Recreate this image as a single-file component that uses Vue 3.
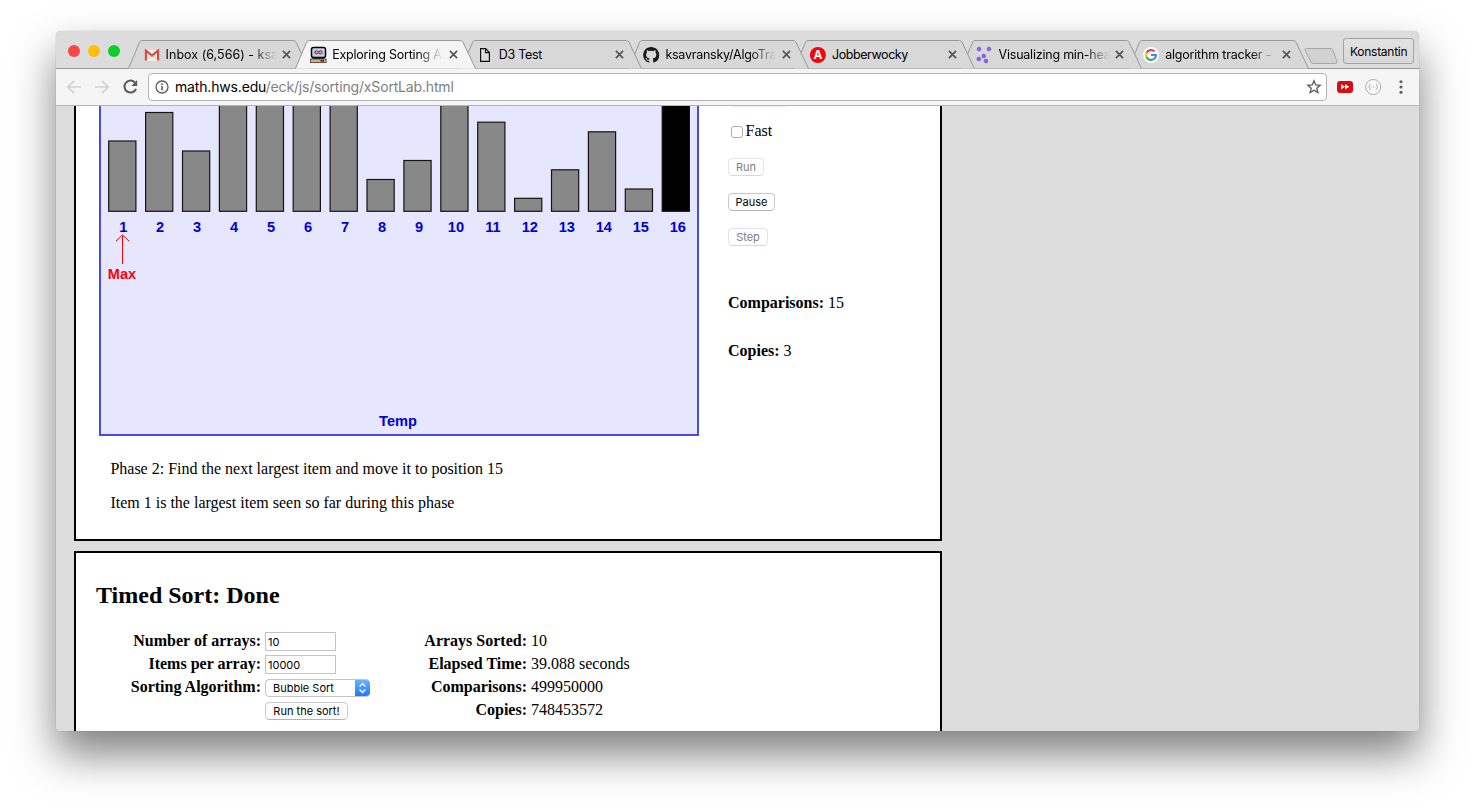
<script setup>
const tabs = [
  { icon: 'gmail', title: 'Inbox (6,566) - ksa', fade: true, ls: 0.02 },
  { icon: 'computer', title: 'Exploring Sorting Al', fade: true, active: true, ls: -0.22 },
  { icon: 'page', title: 'D3 Test', ls: -0.3 },
  { icon: 'github', title: 'ksavransky/AlgoTrac', fade: true, ls: -0.25 },
  { icon: 'angel', title: 'Jobberwocky', ls: -0.42 },
  { icon: 'nodes', title: 'Visualizing min-heap', fade: true, ls: -0.22 },
  { icon: 'google', title: 'algorithm tracker - G', fade: true, ls: -0.2 },
]
const tops = [35, 6.5, 45, -20, -20, -20, -20, 73.5, 54.5, -20, 16.2, 92.3, 63.8, 25.8, 83, -20]
const bars = tops.map((top, i) => ({
  n: i + 1,
  x: 9.7 + i * 36.9,
  y: top,
  h: 105.3 - top,
  label: 24.2 + i * 36.97,
  fill: i === 15 ? '#000' : '#888',
}))
const results = [
  ['Arrays Sorted:', '10'],
  ['Elapsed Time:', '39.088 seconds'],
  ['Comparisons:', '499950000'],
  ['Copies:', '748453572'],
]
</script>

<template>
  <div class="desktop">
    <div class="window">
      <header class="strip">
        <div class="lights"><i class="red"></i><i class="amber"></i><i class="green"></i></div>
        <div class="tabs">
          <div v-for="(t, i) in tabs" :key="i" class="tab" :style="{ zIndex: t.active ? 20 : 10 - i }">
            <svg class="shape" width="182" height="30" viewBox="0 0 182 30">
              <path d="M0.5 28.5 L11.6 2.2 Q12.5 0.5 14 0.5 H165.5 Q167 0.5 168 2.2 L180.5 28.5 Z" :fill="t.active ? '#f5f5f5' : '#d8d8d8'" />
              <path d="M0.5 28.5 L11.6 2.2 Q12.5 0.5 14 0.5 H165.5 Q167 0.5 168 2.2 L180.5 28.5" fill="none" stroke="#989898" />
              <path v-if="t.active" d="M1 28.5 H180 V30 H1 Z" fill="#f5f5f5" />
            </svg>
            <svg class="fav" width="18" height="18" viewBox="0 0 18 18">
              <g v-if="t.icon === 'gmail'">
                <path d="M2 4 H16 V15 H2 Z" fill="#eeeae8" />
                <path d="M2.9 14.6 V4.6 L9 9.6 L15.1 4.6 V14.6" fill="none" stroke="#d8493d" stroke-width="2.1" />
                <path d="M4 14 L8 9.5 M14 14 L10 9.5" stroke="#cfcac8" stroke-width=".7" />
              </g>
              <g v-else-if="t.icon === 'computer'" transform="translate(-1.5 -.6)">
                <rect x="3" y="2" width="14" height="10" rx="2" fill="#a9dcf5" stroke="#000" stroke-width="1.5" />
                <path d="M10 7 C8.8 5 6.4 5 6.4 7 S8.8 9 10 7 C11.2 5 13.6 5 13.6 7 S11.2 9 10 7" fill="none" stroke="#e21" stroke-width="1.3" />
                <rect x="2" y="13.6" width="15.6" height="3.6" fill="#d9ab7d" stroke="#533" stroke-width=".8" />
                <path d="M4 12.8 H16 M12 15.4 H15.5" stroke="#111" stroke-width="1.2" />
              </g>
              <path v-else-if="t.icon === 'page'" d="M4.6 2.7 H9.7 L13.4 6.5 V15.3 H4.6 Z M9.5 2.7 V6.7 H13.4" fill="#fff" fill-opacity=".15" stroke="#111" stroke-width="1.2" />
              <g v-else-if="t.icon === 'github'" transform="translate(.2 1)">
                <path fill="#191717" fill-rule="evenodd" d="M8 0C3.58 0 0 3.58 0 8c0 3.54 2.29 6.53 5.47 7.59.4.07.55-.17.55-.38 0-.19-.01-.82-.01-1.49-2.01.37-2.53-.49-2.69-.94-.09-.23-.48-.94-.82-1.13-.28-.15-.68-.52-.01-.53.63-.01 1.08.58 1.23.82.72 1.21 1.87.87 2.33.66.07-.52.28-.87.51-1.07-1.78-.2-3.64-.89-3.64-3.95 0-.87.31-1.59.82-2.15-.08-.2-.36-1.02.08-2.12 0 0 .67-.21 2.2.82.64-.18 1.32-.27 2-.27s1.36.09 2 .27c1.53-1.04 2.2-.82 2.2-.82.44 1.1.16 1.92.08 2.12.51.56.82 1.27.82 2.15 0 3.07-1.87 3.75-3.65 3.95.29.25.54.73.54 1.48 0 1.07-.01 1.93-.01 2.2 0 .21.15.46.55.38A8.01 8.01 0 0 0 16 8c0-4.42-3.58-8-8-8z" />
              </g>
              <g v-else-if="t.icon === 'angel'">
                <circle cx="8.9" cy="9" r="8" fill="#fb0007" />
                <text x="8.9" y="13.2" text-anchor="middle" class="angel-a">A</text>
              </g>
              <g v-else-if="t.icon === 'nodes'" fill="#8168ee" stroke="#6a50d8" stroke-width=".6" transform="translate(-1 0)">
                <circle cx="4" cy="3" r="1.9" /><circle cx="14" cy="3" r="1.9" />
                <circle cx="8.7" cy="10" r="1.9" /><circle cx="3.8" cy="13" r="1.9" /><circle cx="11" cy="15" r="1.9" />
              </g>
              <g v-else fill="none" stroke-width="2.1" transform="translate(-1 0)">
                <circle cx="9" cy="9" r="8" fill="#fff" />
                <path d="M12.6 5.6 A5 5 0 0 0 4.5 6.9" stroke="#ea4335" />
                <path d="M4.6 6.7 A5 5 0 0 0 4.6 11.3" stroke="#fbbc05" />
                <path d="M4.5 11.1 A5 5 0 0 0 12.2 12.8" stroke="#34a853" />
                <path d="M9 9 H14 A5 5 0 0 1 12.1 12.9" stroke="#4285f4" />
              </g>
            </svg>
            <span class="title" :class="{ fade: t.fade }" :style="{ letterSpacing: t.ls + 'px' }">{{ t.title }}</span>
            <svg class="close" width="9" height="9" viewBox="0 0 9 9"><path d="M.9 .9 L8.1 8.1 M8.1 .9 L.9 8.1" stroke="#555" stroke-width="1.7" /></svg>
          </div>
        </div>
        <svg class="newtab" width="34" height="18" viewBox="0 0 34 18"><path d="M2.5 1.5 H26 Q28 1.5 28.8 3.2 L33 14.5 Q33.4 16.5 31.5 16.5 H9.5 Q7.5 16.5 6.8 14.8 L1 3 Q.6 1.5 2.5 1.5 Z" fill="#d2d2d2" stroke="#a6a6a6" /></svg>
        <button class="user">Konstantin</button>
      </header>

      <div class="toolbar">
        <svg class="nav" width="90" height="20" viewBox="0 0 90 20" fill="none">
          <path d="M19 10 H6 M12 3.8 L5.8 10 L12 16.2" stroke="#d2d2d2" stroke-width="1.7" />
          <path d="M33 10 H46 M40 3.8 L46.2 10 L40 16.2" stroke="#d2d2d2" stroke-width="1.7" />
          <path d="M73 5.6 A6 6 0 1 0 74 12" stroke="#5a5a5a" stroke-width="2" />
          <path d="M75.2 3 V9 H69.2 Z" fill="#5a5a5a" />
        </svg>
        <div class="omnibox">
          <svg width="14" height="14" viewBox="0 0 14 14"><circle cx="7" cy="7" r="6" fill="none" stroke="#5a5a5a" stroke-width="1.3" /><path d="M7 6 V10.6 M7 3.3 V4.9" stroke="#5a5a5a" stroke-width="1.5" /></svg>
          <span class="url">math.hws.edu<em>/eck/js/sorting/xSortLab.html</em></span>
          <svg width="16" height="16" viewBox="0 0 16 16"><path d="M8 1.8 L9.7 6 L14.2 6.3 L10.8 9.2 L11.9 13.6 L8 11.2 L4.1 13.6 L5.2 9.2 L1.8 6.3 L6.3 6 Z" fill="none" stroke="#5a5a5a" stroke-width="1.3" /></svg>
        </div>
        <svg class="ext" width="76" height="20" viewBox="0 0 76 20">
          <rect x="1" y="4" width="16" height="12" rx="3" fill="#dd0b10" />
          <path d="M5 7 L9 9.8 L5 12.6 Z M9 7 L13.3 9.8 L9 12.6 Z" fill="#fff" />
          <circle cx="37.2" cy="10" r="7.5" fill="#fafafa" stroke="#ababab" />
          <path d="M34.6 7.2 Q33.6 7.2 33.6 8.2 Q33.6 10 32.7 10 Q33.6 10 33.6 11.8 Q33.6 12.8 34.6 12.8 M39.8 7.2 Q40.8 7.2 40.8 8.2 Q40.8 10 41.7 10 Q40.8 10 40.8 11.8 Q40.8 12.8 39.8 12.8" fill="none" stroke="#aaa" />
          <path d="M35.4 10 H39.2" stroke="#bbb" stroke-dasharray="1 .5" />
          <g fill="#606060"><circle cx="65" cy="4.8" r="1.55" /><circle cx="65" cy="10" r="1.55" /><circle cx="65" cy="15.2" r="1.55" /></g>
        </svg>
      </div>

      <main class="page">
        <section class="panel lab">
          <div class="lab-row">
            <svg class="canvas" width="600" height="330" viewBox="0 0 600 330">
              <path d="M0 -5 H600 V330 H0 Z" fill="#e6e6ff" />
              <path d="M1 -5 V329 H599 V-5" fill="none" stroke="#4a4ae0" stroke-width="2" />
              <rect v-for="b in bars" :key="b.n" :x="b.x" :y="b.y" width="27.2" :height="b.h" :fill="b.fill" stroke="#151515" stroke-width="1.2" />
              <text v-for="b in bars" :key="'l' + b.n" class="mark" :x="b.label" y="126" text-anchor="middle">{{ b.n }}</text>
              <path d="M23.5 158 V129.5 M17 135 L23.5 129 L30 135" fill="none" stroke="#f00" />
              <text class="mark max" x="23" y="173" text-anchor="middle">Max</text>
              <text class="mark" x="299" y="320" text-anchor="middle">Temp</text>
            </svg>
            <div class="controls">
              <div class="peek"></div>
              <label class="fast"><i class="box"></i>Fast</label>
              <button class="btn off run">Run</button>
              <button class="btn pause">Pause</button>
              <button class="btn off step">Step</button>
              <p class="count"><b>Comparisons:</b> 15</p>
              <p class="count"><b>Copies:</b> 3</p>
            </div>
          </div>
          <p class="msg">Phase 2: Find the next largest item and move it to position 15</p>
          <p class="msg">Item 1 is the largest item seen so far during this phase</p>
        </section>

        <section class="panel timed">
          <h2>Timed Sort: Done</h2>
          <div class="forms">
            <div class="grid left">
              <b>Number of arrays:</b><span class="field">10</span>
              <b>Items per array:</b><span class="field">10000</span>
              <b>Sorting Algorithm:</b>
              <span class="select">Bubble Sort
                <svg width="15" height="18" viewBox="0 0 15 18"><path d="M4.6 7.4 L7.5 4.5 L10.4 7.4 M4.6 10.6 L7.5 13.5 L10.4 10.6" fill="none" stroke="#fff" stroke-width="1.4" /></svg>
              </span>
              <b></b><button class="btn sort">Run the sort!</button>
            </div>
            <div class="grid right">
              <template v-for="r in results" :key="r[0]"><b>{{ r[0] }}</b><span>{{ r[1] }}</span></template>
            </div>
          </div>
        </section>
      </main>
    </div>
  </div>
</template>

<style>
html, body { margin: 0; background: #fff; overflow: hidden; }
</style>

<style scoped>
* { box-sizing: border-box; }
.desktop { width: 1475px; height: 811px; padding: 31px 56px 80px; overflow: hidden; background: #fff; }
.window { width: 1363px; height: 700px; border-radius: 5px; background: #ddd; box-shadow: 0 0 1px rgba(0,0,0,.4), 0 23px 43px rgba(0,0,0,.5); display: flex; flex-direction: column; }
.strip { height: 38px; background: #dcdcdc; border-radius: 5px 5px 0 0; border-bottom: 1px solid #989898; display: flex; position: relative; font-family: Inter, sans-serif; }
.lights { display: flex; gap: 8px; padding: 14px 0 0 12px; width: 72px; flex: none; }
.lights i { width: 12px; height: 12px; border-radius: 50%; }
.red { background: #fc4545; }
.amber { background: #febe0a; }
.green { background: #0ccf2c; }
.tabs { display: flex; height: 38px; padding-top: 9px; flex: none; }
.tab { width: 166.6px; height: 29px; position: relative; display: flex; align-items: center; padding-left: 15px; flex: none; }
.shape { position: absolute; left: 0; top: 0; }
.fav, .title, .close { position: relative; flex: none; }
.title { width: 112px; margin-left: 4.6px; font-size: 12.5px; line-height: 18px; white-space: nowrap; color: #000; }
.fade { -webkit-mask-image: linear-gradient(90deg, #000 76%, transparent 99%); mask-image: linear-gradient(90deg, #000 76%, transparent 99%); }
.close { margin-left: 4.5px; }
.angel-a { font: bold 12px Inter, sans-serif; fill: #fff; }
.newtab { margin: 16px 0 0 10px; flex: none; }
.user { width: 71px; height: 26px; margin: 7px 0 0 5px; padding: 0; border: 1px solid #a3a3a3; border-radius: 3px; background: linear-gradient(#e2e2e2, #d9d9d9); font: 12px Inter, sans-serif; letter-spacing: -0.25px; color: #000; flex: none; }
.toolbar { height: 37px; background: #f5f5f5; border-bottom: 1px solid #b6b4b6; display: flex; align-items: center; flex: none; }
.nav { margin-left: 6px; flex: none; }
.omnibox { width: 1179px; height: 28px; margin-left: -4px; border: 1px solid #b4b2b4; border-radius: 4px; background: #fff; display: flex; align-items: center; padding: 0 4px 0 6px; flex: none; }
.url { flex: 1; margin: -2px 0 0 6px; font: 14px Inter, sans-serif; letter-spacing: -0.17px; color: #000; white-space: nowrap; }
.url em { font-style: normal; color: #808080; }
.ext { margin-left: 9px; flex: none; }
.page { height: 625px; overflow: hidden; border-radius: 0 0 4px 4px; background: #ddd; padding-left: 18px; font: 16px/18px "Liberation Serif", serif; color: #000; }
.panel { width: 868px; background: #fff; border: 2px solid #000; }
.lab { height: 435px; border-top: 0; padding-left: 23px; }
.lab-row { display: flex; height: 330px; }
.canvas { flex: none; display: block; }
.mark { font: bold 14.6px "Liberation Sans", Arial, sans-serif; fill: #0000d8; }
.max { fill: #f00; }
.controls { margin-left: 29px; display: flex; flex-direction: column; align-items: flex-start; }
.peek { width: 56px; height: 1px; margin-left: 3px; background: #efefef; }
.fast { display: flex; margin-top: 15px; height: 18px; }
.box { width: 12px; height: 12px; margin: 4px 2.5px 0 3px; border: 1px solid #adadad; border-radius: 3px; background: #fff; }
.btn { height: 18px; padding: 0; border: 1px solid #c9c9c9; border-bottom-color: #b4b4b4; border-radius: 4.5px; background: #fff; font: 11px/15px Inter, sans-serif; color: #000; white-space: nowrap; }
.off { color: #808080; border-color: #e4e4e4; border-bottom-color: #d8d8d8; }
.run { width: 36px; margin-top: 18px; }
.pause { width: 47px; margin-top: 17px; }
.step { width: 40px; margin-top: 17px; }
.count { margin: 48px 0 -18px; }
.msg { margin: 0 0 16px 11.4px; }
.lab-row + .msg { margin-top: 24px; }
.timed { margin-top: 10px; height: 240px; padding: 28px 0 0 21px; }
h2 { margin: 0 0 0 -1px; font-size: 24px; line-height: 28px; }
.forms { display: flex; margin-top: 20px; }
.grid { display: grid; grid-auto-rows: 23px; column-gap: 4px; line-height: 23px; }
.grid b { text-align: right; }
.left { grid-template-columns: 164px 106px; }
.right { grid-template-columns: 156px 200px; }
.field { width: 71px; height: 19px; margin-top: 3px; border: 1px solid #c4c4c4; font: 11px/18px Inter, sans-serif; padding-left: 2px; }
.select { display: flex; justify-content: space-between; width: 105px; height: 18px; margin-top: 4px; border: 1px solid #c4c4c4; border-right: 0; border-radius: 4.5px; font: 11px/16px Inter, sans-serif; padding-left: 7px; overflow: hidden; }
.select svg { margin-top: -1px; background: linear-gradient(#6cb4fb, #1878fb); }
.sort { width: 83px; margin-top: 4px; }
</style>
